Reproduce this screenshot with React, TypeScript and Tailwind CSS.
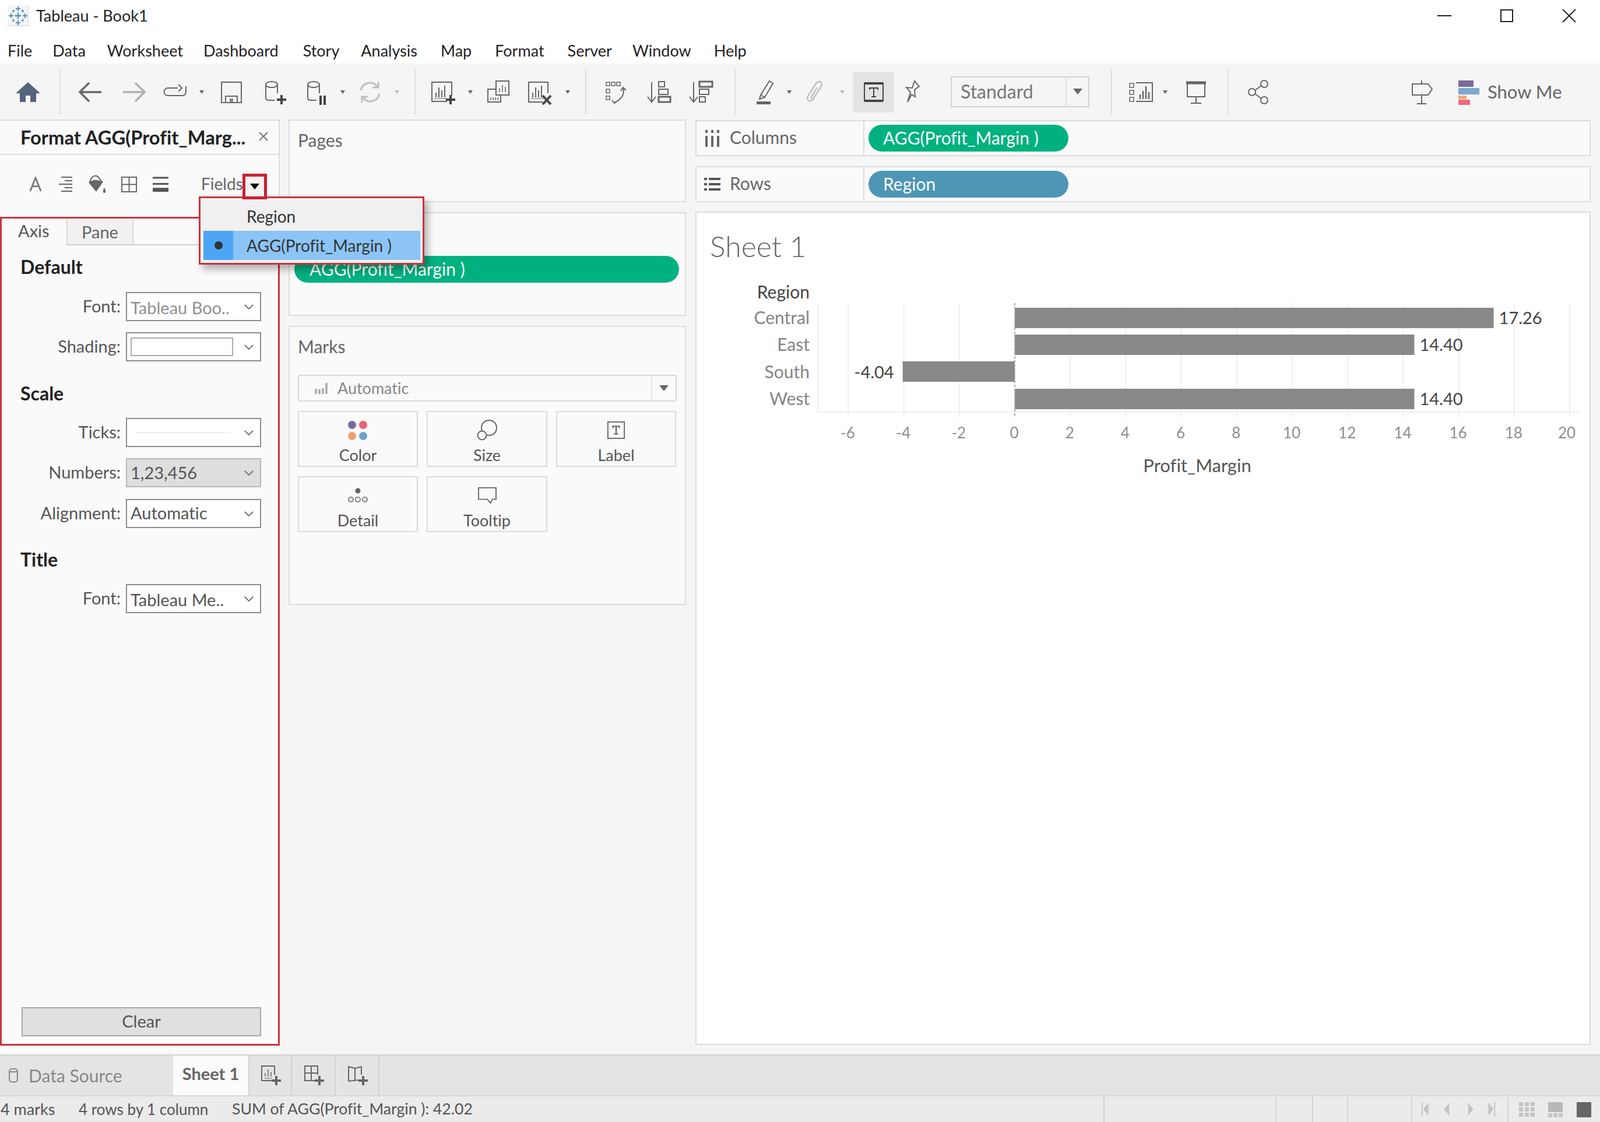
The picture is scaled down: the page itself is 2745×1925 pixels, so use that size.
import React from "react";

const Ic = ({ children, className = "" }: { children?: React.ReactNode; className?: string }) => (
  <svg viewBox="0 0 44 44" fill="none" stroke="#666666" strokeWidth="2" className={"w-[44px] h-[44px] flex-none " + className}>
    {children}
  </svg>
);
const Caret = ({ className = "", light = false }: { className?: string; light?: boolean }) => (
  <svg viewBox="0 0 12 12" className={"w-[12px] h-[12px] flex-none " + className}>
    <polygon points="2,3 10,3 6,9" fill={light ? "#bbbbbb" : "#666666"} />
  </svg>
);
const BigCaret = () => (
  <svg viewBox="0 0 18 12" className="w-[18px] h-[12px] flex-none">
    <polygon points="1,1 17,1 9,11" fill="#666666" />
  </svg>
);
const Sep = ({ className = "" }: { className?: string }) => <div className={"w-[2px] self-stretch bg-[#dedede] flex-none " + className} />;

const Bars = () => (
  <g strokeWidth="2">
    <path d="M11 31V23M16 31V14M21 31V19M26 31V11" />
    <path d="M8 33H30" strokeWidth="1" />
  </g>
);
const Plus = () => <path d="M36 27V43M28 35H44" stroke="#444444" strokeWidth="4" />;

function Chevron() {
  return (
    <svg viewBox="0 0 20 12" className="w-[18px] h-[11px] flex-none">
      <path d="M2 2L10 10L18 2" fill="none" stroke="#666666" strokeWidth="2" />
    </svg>
  );
}

function Select({ label, mt, gray, children }: { label: string; mt: string; gray?: boolean; children?: React.ReactNode }) {
  return (
    <div className={"flex items-center " + mt}>
      <div className="w-[204px] pb-[3px] text-right text-[29px] leading-[32px] text-[#555555] font-normal">{label}</div>
      <div className={gray
        ? "ml-[9px] w-[232px] h-[50px] flex items-center justify-between pl-[6px] pr-[10px] border-2 border-[#b8b8b8] bg-[#dedede]"
        : "ml-[9px] w-[232px] h-[50px] flex items-center justify-between pl-[6px] pr-[10px] border-2 border-[#8c8c8c] bg-white"}>
        <div className="flex-1 min-w-0 text-[29px] leading-[32px] whitespace-nowrap">{children}</div>
        <Chevron />
      </div>
    </div>
  );
}

function MarkCard({ label, children }: { label: string; children: React.ReactNode }) {
  return (
    <div className="h-[96px] border-2 border-[#dcdcdc] flex flex-col items-center pt-[11px]">
      <div className="h-[40px] flex items-center justify-center">{children}</div>
      <div className="mt-[8px] text-[27px] leading-[30px] text-[#555555]">{label}</div>
    </div>
  );
}

function Shelf({ icon, label, pill, color }: { icon: React.ReactNode; label: string; pill: string; color: string }) {
  return (
    <div className="h-[62px] flex-none flex items-center border-2 border-[#dcdcdc] bg-[#fafafa]">
      <div className="w-[288px] h-full flex items-center border-r-2 border-[#dcdcdc]">
        <div className="w-[57px] flex justify-center">{icon}</div>
        <span className="text-[30px] pb-[3px] text-[#666666]">{label}</span>
      </div>
      <div className={"ml-[7px] w-[343px] h-[46px] rounded-full flex items-center pl-[25px] pb-[2px] text-[30px] text-white " + color}>{pill}</div>
    </div>
  );
}

const gridXs = [-6, -4, -2, 0, 2, 4, 6, 8, 10, 12, 14, 16, 18, 20];
const X = (v: number) => 1741 + v * 47.6;
const rows = [
  { name: "Central", y: 546, top: 528, v: 17.26, t: "17.26" },
  { name: "East", y: 592, top: 574, v: 14.4, t: "14.40" },
  { name: "South", y: 639, top: 620, v: -4.04, t: "-4.04" },
  { name: "West", y: 685, top: 667, v: 14.4, t: "14.40" },
];

function Chart() {
  return (
    <svg viewBox="1195 480 1532 1311" className="w-[1532px] h-[1311px] block">
      {gridXs.map((v) => (
        <line key={v} x1={X(v)} x2={X(v)} y1={520} y2={716} stroke="#efefef" strokeWidth="2" />
      ))}
      <line x1="1403" x2="1403" y1="520" y2="707" stroke="#efefef" strokeWidth="2" />
      <line x1="1403" x2="2710" y1="707" y2="707" stroke="#efefef" strokeWidth="2" />
      {rows.map((r) => (
        <rect key={r.name} x={r.v > 0 ? 1741 : X(r.v)} y={r.top} width={Math.abs(r.v) * 47.6} height={35} fill="#888888" />
      ))}
      <line x1="1741" x2="1741" y1="520" y2="716" stroke="#aaaaaa" strokeWidth="2" strokeDasharray="4 3" />
      <text x="1389" y="502" dy="0.32em" textAnchor="end" className="text-[30px] fill-[#444444]">Region</text>
      {rows.map((r) => (
        <text key={r.name} x="1389" y={r.y} dy="0.32em" textAnchor="end" className="text-[30px] fill-[#858585]">{r.name}</text>
      ))}
      {rows.map((r) => (
        <text key={r.name} x={r.v > 0 ? X(r.v) + 9 : X(r.v) - 15} y={r.y} dy="0.35em" textAnchor={r.v > 0 ? "start" : "end"} className="text-[29px] fill-[#444444]">{r.t}</text>
      ))}
      {gridXs.map((v) => (
        <text key={v} x={v === 20 ? X(v) - 5 : X(v) - 1} y="743" dy="0.35em" textAnchor="middle" className="text-[26px] fill-[#8f8f8f]">{v}</text>
      ))}
      <text x="2054" y="800" dy="0.32em" textAnchor="middle" className="text-[31px] fill-[#555555]">Profit_Margin</text>
    </svg>
  );
}

function Logo() {
  const plus = (x: number, y: number, r: number, w: number) => (
    <path key={x + "-" + y} d={`M${x - r} ${y}H${x + r}M${x} ${y - r}V${y + r}`} stroke="#4f94c6" strokeWidth={w} fill="none" />
  );
  return (
    <svg viewBox="0 0 36 36" className="w-[36px] h-[36px] flex-none ml-[13px]">
      <rect x="0" y="0" width="36" height="36" fill="#f6f6f6" />
      <path d="M0 35H35V0" fill="none" stroke="#cfcfcf" />
      {plus(18, 18, 5.5, 2.4)}
      {plus(18, 6, 4, 2)}
      {plus(18, 30, 4, 2)}
      {plus(6, 18, 4, 2)}
      {plus(30, 18, 4, 2)}
      {plus(10, 10, 2.5, 1.6)}
      {plus(26, 10, 2.5, 1.6)}
      {plus(10, 26, 2.5, 1.6)}
      {plus(26, 26, 2.5, 1.6)}
    </svg>
  );
}

const menu = [
  ["File", "ml-[13px]"],
  ["Data", "ml-[35px]"],
  ["Worksheet", "ml-[37px]"],
  ["Dashboard", "ml-[35px]"],
  ["Story", "ml-[42px]"],
  ["Analysis", "ml-[37px]"],
  ["Map", "ml-[40px]"],
  ["Format", "ml-[40px]"],
  ["Server", "ml-[40px]"],
  ["Window", "ml-[35px]"],
  ["Help", "ml-[39px]"],
];

export default function App() {
  return (
    <div className="relative w-[2745px] h-[1925px] overflow-hidden flex flex-col bg-[#f5f5f5] font-[Lato,sans-serif] text-[#444444] [font-variant-ligatures:none]">
      {/* Title bar */}
      <div className="h-[54px] flex-none flex items-center bg-white font-['Noto_Sans',sans-serif]">
        <Logo />
        <span className="ml-[13px] text-[27px] text-[#222222]">Tableau - Book1</span>
        <div className="ml-auto flex items-center pr-[41px]">
          <div className="w-[24px] h-[2px] bg-[#222222]" />
          <div className="ml-[84px] w-[22px] h-[22px] border-2 border-[#222222]" />
          <svg viewBox="0 0 24 24" className="ml-[84px] w-[24px] h-[24px]"><path d="M1 1L23 23M23 1L1 23" stroke="#222222" strokeWidth="2" /></svg>
        </div>
      </div>
      {/* Menu */}
      <div className="h-[55px] flex-none pt-[11px] flex items-center bg-white font-['Noto_Sans',sans-serif] text-[27px] text-[#222222]">
        {menu.map(([m, c]) => (
          <span key={m} className={c}>{m}</span>
        ))}
      </div>
      {/* Toolbar */}
      <div className="h-[88px] flex-none pt-[10px] flex items-center bg-[#f5f5f5]">
        <Ic className="ml-[26px]"><path d="M22 5L1 24H8V39H18V28H26V39H36V24H43Z" fill="#54647a" stroke="none" /></Ic>
        <Sep className="ml-[32px]" />
        <Ic className="ml-[29px]"><path d="M41 22H5M20 6L4 22L20 38" strokeWidth="3.5" stroke="#666666" /></Ic>
        <Ic className="ml-[31px]"><path d="M3 22H39M24 6L40 22L24 38" strokeWidth="3.5" stroke="#b0b0b0" /></Ic>
        <Ic className="ml-[26px]"><path d="M27 15H10A6.5 6.5 0 0 0 10 28H35A6 6 0 0 0 41 22V12" /><path d="M28 9L34 15L28 21" /></Ic>
        <Caret className="ml-[18px]" />
        <Ic className="ml-[23px]"><rect x="5" y="5" width="34" height="35" /><rect x="12" y="29" width="20" height="11" strokeWidth="2" /><rect x="19" y="33" width="6" height="6" fill="#888888" stroke="none" /></Ic>
        <Ic className="ml-[28px]"><ellipse cx="19" cy="9" rx="10" ry="5" /><path d="M9 9V32Q9 36 14 36H24M29 9V24" /><Plus /></Ic>
        <Ic className="ml-[28px]"><ellipse cx="19" cy="9" rx="10" ry="5" /><path d="M9 9V32Q9 36 14 36H24M29 9V24" /><path d="M31 28V44M38 28V44" stroke="#444444" strokeWidth="4" /></Ic>
        <Caret className="ml-[19px]" />
        <Ic className="ml-[19px]"><g stroke="#bdbdbd" strokeWidth="3"><path d="M6 19A16 16 0 0 1 34 12" /><path d="M38 25A16 16 0 0 1 10 32" /><path d="M36 4V14H26" /><path d="M8 40V30H18" /></g></Ic>
        <Caret light className="ml-[18px]" />
        <Sep className="ml-[24px]" />
        <Ic className="ml-[24px]"><path d="M30 38H4V5H38V28" /><Bars /><Plus /></Ic>
        <Caret className="ml-[20px]" />
        <Ic className="ml-[20px]"><rect x="18" y="3" width="22" height="24" /><path d="M24 22V15M29 22V10M34 22V13" strokeWidth="1.5" /><path d="M18 17H4V39H26V27" /><path d="M9 31V36M13 31V36M17 31V36M21 31V36" strokeWidth="1.5" /></Ic>
        <Ic className="ml-[26px]"><path d="M28 39H4V5H37V24" /><Bars /><path d="M28 28L42 43M42 28L28 43" stroke="#444444" strokeWidth="4" /></Ic>
        <Caret className="ml-[21px]" />
        <Sep className="ml-[24px]" />
        <Ic className="ml-[28px]"><g strokeWidth="1.5"><rect x="6" y="5" width="6" height="6" /><rect x="15" y="5" width="6" height="6" /><rect x="24" y="5" width="6" height="6" /><rect x="6" y="17" width="6" height="6" /><rect x="6" y="29" width="6" height="6" /></g><path d="M35 15C38 26 32 35 20 40M16 36L20 41L25 37M31 20L35 14L40 19" /></Ic>
        <Ic className="ml-[30px]"><path d="M10 5V38M3 30L10 39L17 30" /><rect x="22" y="4" width="10" height="9" /><rect x="22" y="17" width="16" height="9" /><rect x="22" y="30" width="20" height="9" strokeWidth="3" /></Ic>
        <Ic className="ml-[28px]"><path d="M10 5V38M3 30L10 39L17 30" /><rect x="20" y="4" width="22" height="9" strokeWidth="3" /><rect x="20" y="17" width="16" height="9" /><rect x="20" y="30" width="10" height="9" /></Ic>
        <Sep className="ml-[36px]" />
        <Ic className="ml-[28px]"><path d="M30 3L36 7L22 31L13 34L15 27Z" /><path d="M15 27L22 31" /><rect x="8" y="38" width="24" height="5" fill="#666666" stroke="none" /></Ic>
        <Caret className="ml-[14px]" />
        <Ic className="ml-[16px]"><path d="M32 13L19 34C15 41 6 36 10 29L24 7C28 1 37 5 33 12L20 32C18 35 14 33 16 30L26 14" stroke="#c0c0c0" strokeWidth="2.4" /></Ic>
        <Caret light className="ml-[19px]" />
        <div className="ml-[13px] w-[70px] h-[70px] flex-none flex items-center justify-center bg-[#e3e3e3]">
          <svg viewBox="0 0 36 36" className="w-[36px] h-[36px]">
            <rect x="2" y="3" width="32" height="30" fill="none" stroke="#444444" strokeWidth="2" />
            <path d="M2 3H34M2 33H34" stroke="#444444" strokeWidth="4" />
            <path d="M11 14V11H25V14M18 11V26M14 26H22" fill="none" stroke="#444444" strokeWidth="2" />
          </svg>
        </div>
        <Ic className="ml-[9px]"><path d="M26 3L34 12L26 18L27 30L21 26L14 39L19 22L12 14L22 15Z" /></Ic>
        <div className="ml-[44px] -mt-[2px] w-[238px] h-[53px] flex-none flex items-center border-2 border-[#d4d4d4] bg-[#f5f5f5]">
          <span className="flex-1 pl-[15px] text-[32px] text-[#777777]">Standard</span>
          <div className="w-[39px] h-full border-l-2 border-[#e0e0e0] flex items-center justify-center"><BigCaret /></div>
        </div>
        <Sep className="ml-[37px]" />
        <Ic className="ml-[29px]"><g strokeWidth="1.5"><rect x="1" y="7" width="7" height="7" /><rect x="1" y="19" width="7" height="7" /><rect x="1" y="31" width="7" height="7" /></g><path d="M12 6H40V38H12" /><path d="M19 34V26M24 34V20M29 34V12M34 34V22" strokeWidth="2.5" /></Ic>
        <Caret className="ml-[12px]" />
        <Ic className="ml-[25px]"><path d="M5 6H39" strokeWidth="5" /><rect x="7" y="6" width="30" height="24" /><path d="M22 30V41M13 41H31" /></Ic>
        <Sep className="ml-[32px]" />
        <Ic className="ml-[30px]"><circle cx="31" cy="8" r="6" /><circle cx="10" cy="22" r="6" /><circle cx="31" cy="36" r="6" /><path d="M26 11L15 19M15 25L26 33" /></Ic>
        <Ic className="ml-[235px]"><path d="M22 2V8M22 27V42M14 42H30" /><path d="M6 8H33L40 17L33 27H6Z" /></Ic>
        <svg viewBox="0 0 44 44" className="ml-[33px] w-[44px] h-[44px] flex-none">
          <rect x="8" y="2" width="26" height="11" fill="#7d6a9c" />
          <rect x="8" y="15" width="36" height="11" fill="#7ea6d2" />
          <rect x="8" y="28" width="14" height="6" fill="#f0a877" />
          <rect x="8" y="35" width="20" height="9" fill="#ef6a7e" />
        </svg>
        <span className="ml-[14px] -mt-[2px] text-[31px] text-[#666666] whitespace-nowrap">Show Me</span>
      </div>
      {/* Main */}
      <div className="flex-1 min-h-0 flex">
        {/* Format panel */}
        <div className="mt-[8px] w-[480px] flex-none flex flex-col bg-[#fafafa] border-t-2 border-[#dcdcdc]">
          <div className="h-[59px] flex-none flex items-center pl-[35px] border-b-2 border-[#dcdcdc] border-r-2">
            <span className="text-[32.7px] font-bold text-[#222222] whitespace-nowrap">Format AGG(Profit_Marg...</span>
            <svg viewBox="0 0 18 18" className="ml-[22px] w-[18px] h-[18px] -mt-[4px]"><path d="M2 2L16 16M16 2L2 16" stroke="#777777" strokeWidth="2" /></svg>
          </div>
          <div className="h-[106px] flex-none flex items-center border-r-2 border-[#dcdcdc] pb-[6px]">
            <svg viewBox="0 0 24 28" className="ml-[50px] w-[22px] h-[26px] flex-none"><path d="M2 27L12 2L22 27M6 18H18" fill="none" stroke="#777777" strokeWidth="3" /></svg>
            <svg viewBox="0 0 26 28" className="ml-[27px] w-[26px] h-[28px] flex-none"><path d="M6 2H25M12 8H25M2 14H25M12 20H25M6 26H25" stroke="#666666" strokeWidth="2" /></svg>
            <svg viewBox="0 0 36 36" className="ml-[23px] w-[36px] h-[36px] flex-none">
              <path d="M4 15L15 3L29 14L17 31Z" fill="#666666" />
              <path d="M7 15C6 7 14 2 18 4C22 6 25 11 25 14C18 11 11 11 7 15Z" fill="#fafafa" stroke="#666666" strokeWidth="2" />
              <path d="M31 24C28 29 28 33 31 33C34 33 34 29 31 24Z" fill="#666666" />
            </svg>
            <svg viewBox="0 0 28 28" className="ml-[24px] w-[27px] h-[27px] flex-none"><rect x="1" y="1" width="26" height="26" fill="none" stroke="#666666" strokeWidth="2" /><path d="M14 1V27M1 14H27" stroke="#666666" strokeWidth="2" /></svg>
            <svg viewBox="0 0 28 28" className="ml-[27px] w-[27px] h-[27px] flex-none"><path d="M0 2H28M0 13H28" stroke="#555555" strokeWidth="3" /><rect x="0" y="20" width="28" height="7" fill="#555555" /></svg>
            <span className="ml-[56px] -mt-[2px] text-[28px] text-[#666666]">Fields</span>
          </div>
          <div className="h-[1422px] flex-none flex flex-col border-[3px] border-[#c9343e] relative">
            <div className="h-[46px] flex-none flex border-b-2 border-[#d0d0d0]">
              <div className="w-[113px] -mb-[2px] pl-[28px] text-[29px] leading-[42px] bg-[#fafafa] text-[#555555] border-r-2 border-[#d8d8d8]">Axis</div>
              <div className="w-[113px] bg-[#f1f1f1] border-r-2 border-[#d8d8d8] flex items-center justify-center text-[29px] text-[#666666] mt-[1px]">Pane</div>
            </div>
            <div className="mt-[17px] pl-[32px] h-[40px] flex items-center text-[32px] font-bold text-[#222222]">Default</div>
            <Select label="Font:" mt="mt-[23px]"><div className="pt-[3px] text-[#909090]">Tableau Boo..</div></Select>
            <Select label="Shading:" mt="mt-[19px]"><div className="w-[176px] h-[32px] border-2 border-[#aaaaaa] bg-white" /></Select>
            <div className="mt-[35px] pl-[32px] h-[40px] flex items-center text-[32px] font-bold text-[#222222]">Scale</div>
            <Select label="Ticks:" mt="mt-[22px]"><div className="ml-[8px] w-[163px] h-[2px] bg-[#eeeeee]" /></Select>
            <Select label="Numbers:" mt="mt-[19px]" gray><span className="text-[#555555]">1,23,456</span></Select>
            <Select label="Alignment:" mt="mt-[20px]"><div className="pb-[2px] text-[#555555]">Automatic</div></Select>
            <div className="mt-[34px] pl-[32px] h-[40px] flex items-center text-[32px] font-bold text-[#222222]">Title</div>
            <Select label="Font:" mt="mt-[22px]"><div className="pt-[3px] text-[#555555]">Tableau Me..</div></Select>
            <div className="mt-auto mb-[13px] ml-[34px] w-[411px] h-[50px] pb-[2px] flex items-center justify-center bg-[#e0e0e0] border-2 border-[#a8a8a8] text-[29px] text-[#555555]">Clear</div>
          </div>
        </div>
        {/* Middle */}
        <div className="ml-[15px] mt-[8px] w-[682px] flex-none flex flex-col gap-[17px]">
          <div className="h-[142px] flex-none border-2 border-[#dcdcdc] bg-[#fafafa] pl-[14px] pt-[11px] text-[30px] text-[#666666]">Pages</div>
          <div className="h-[178px] flex-none relative border-2 border-[#dcdcdc] bg-[#fafafa] text-[30px] text-[#666666]">
            <div className="absolute left-[8px] top-[73px] w-[660px] h-[46px] pb-[2px] rounded-full bg-[#00b180] text-white flex items-center pl-[26px]">AGG(Profit_Margin )</div>
          </div>
          <div className="h-[479px] flex-none border-2 border-[#dcdcdc] bg-[#fafafa] px-[14px] pt-[17px]">
            <div className="h-[32px] flex items-center text-[30px] text-[#666666]">Marks</div>
            <div className="mt-[33px] h-[46px] flex items-center rounded-[3px] border-2 border-[#d8d8d8]">
              <svg viewBox="0 0 24 24" className="ml-[26px] w-[24px] h-[24px] flex-none"><path d="M3 22V13M9 22V14M15 22V12M21 22V3" stroke="#aaaaaa" strokeWidth="3.5" /></svg>
              <span className="ml-[16px] flex-1 text-[27px] text-[#888888]">Automatic</span>
              <div className="w-[42px] h-full border-l-2 border-[#e4e4e4] flex items-center justify-center"><BigCaret /></div>
            </div>
            <div className="mt-[16px] grid grid-cols-[206px_207px_206px] gap-x-[15px] gap-y-[16px]">
              <MarkCard label="Color">
                <svg viewBox="0 0 36 36" className="w-[36px] h-[36px]">
                  <circle cx="8" cy="9" r="7" fill="#7b6a9e" />
                  <circle cx="27" cy="9" r="7" fill="#ee5f73" />
                  <circle cx="8" cy="28" r="7" fill="#f0a06e" />
                  <circle cx="27" cy="28" r="7" fill="#6f9fd0" />
                </svg>
              </MarkCard>
              <MarkCard label="Size">
                <svg viewBox="0 0 36 36" className="w-[36px] h-[36px]" fill="none" stroke="#666666" strokeWidth="2"><circle cx="21" cy="14" r="13" /><circle cx="9" cy="27" r="7.5" fill="#fafafa" /></svg>
              </MarkCard>
              <MarkCard label="Label">
                <svg viewBox="0 0 34 34" className="w-[32px] h-[32px]"><rect x="2" y="2" width="30" height="30" fill="none" stroke="#666666" strokeWidth="2" /><path d="M11 13V10H23V13M17 10V24M13 24H21" fill="none" stroke="#555555" strokeWidth="2" /></svg>
              </MarkCard>
              <MarkCard label="Detail">
                <svg viewBox="0 0 36 26" className="w-[36px] h-[26px]"><circle cx="18" cy="5" r="4.5" fill="#666666" /><circle cx="6" cy="20" r="4" fill="none" stroke="#666666" strokeWidth="1.6" /><circle cx="18" cy="20" r="4" fill="none" stroke="#666666" strokeWidth="1.6" /><circle cx="30" cy="20" r="4" fill="none" stroke="#666666" strokeWidth="1.6" /></svg>
              </MarkCard>
              <MarkCard label="Tooltip">
                <svg viewBox="0 0 36 32" className="w-[34px] h-[30px]"><path d="M2 2H34V23H27L24 30L18 23H2Z" fill="none" stroke="#666666" strokeWidth="2" /></svg>
              </MarkCard>
            </div>
          </div>
        </div>
        {/* Right */}
        <div className="ml-[16px] mt-[9px] mb-[16px] w-[1536px] flex-none flex flex-col">
          <Shelf
            label="Columns"
            pill="AGG(Profit_Margin )"
            color="bg-[#00b180]"
            icon={<svg viewBox="0 0 26 32" className="w-[26px] h-[32px] -ml-[4px]"><path d="M3 12V31M13 12V31M23 12V31" stroke="#666666" strokeWidth="4" /><path d="M3 2V7M13 2V7M23 2V7" stroke="#666666" strokeWidth="4" /></svg>}
          />
          <div className="mt-[17px]">
            <Shelf
              label="Rows"
              pill="Region"
              color="bg-[#4e96b6]"
              icon={<svg viewBox="0 0 30 26" className="w-[30px] h-[26px] -ml-[4px]"><path d="M1 4H6M1 13H6M1 22H6M9 4H29M9 13H29M9 22H29" stroke="#555555" strokeWidth="4" /></svg>}
            />
          </div>
          <div className="mt-[16px] flex-1 min-h-0 border-2 border-[#dcdcdc] bg-white overflow-hidden">
            <div className="h-[115px] pl-[23px] pt-[27px]">
              <div className="h-[60px] flex items-center text-[50px] font-light text-[#666666]">Sheet 1</div>
            </div>
            <Chart />
          </div>
        </div>
      </div>
      {/* Sheet tabs */}
      <div className="h-[70px] flex-none flex items-stretch bg-[#e4e4e4] border-t-2 border-[#d2d2d2]">
        <div className="w-[297px] flex items-center pl-[14px]">
          <svg viewBox="0 0 20 30" className="w-[18px] h-[26px]"><rect x="2" y="2" width="16" height="26" rx="5" fill="none" stroke="#888888" strokeWidth="2.4" /><path d="M2 8H18" stroke="#888888" strokeWidth="2.4" /></svg>
          <span className="ml-[17px] text-[30px] text-[#888888]">Data Source</span>
        </div>
        <div className="w-[129px] bg-[#fbfbfb] flex items-center justify-center pb-[6px] text-[29px] font-bold text-[#666666] whitespace-nowrap">Sheet 1</div>
        <div className="w-[75px] border-r-2 border-l-2 border-[#d2d2d2] flex items-center justify-center">
          <svg viewBox="0 0 36 36" className="w-[36px] h-[36px]" fill="none" stroke="#666666" strokeWidth="2"><path d="M22 27H3V2H25V17" /><path d="M9 20V14M14 20V8M19 20V12" strokeWidth="1.5" /><path d="M8 23H20" strokeWidth="1" /><path d="M28 19V35M20 27H36" stroke="#666666" strokeWidth="4" /></svg>
        </div>
        <div className="w-[75px] border-r-2 border-[#d2d2d2] flex items-center justify-center">
          <svg viewBox="0 0 36 36" className="w-[36px] h-[36px]" fill="none" stroke="#666666" strokeWidth="2"><path d="M20 27H3V2H25V17" /><path d="M14 2V27M3 14H25" /><path d="M28 19V35M20 27H36" stroke="#666666" strokeWidth="4" /></svg>
        </div>
        <div className="w-[75px] border-r-2 border-[#d2d2d2] flex items-center justify-center">
          <svg viewBox="0 0 36 36" className="w-[36px] h-[36px]" fill="none" stroke="#666666" strokeWidth="2"><path d="M20 26L3 28V3L14 6L25 3V17" /><path d="M14 6V27" /><path d="M28 19V35M20 27H36" stroke="#666666" strokeWidth="4" /></svg>
        </div>
      </div>
      {/* Status bar */}
      <div className="h-[46px] flex-none flex items-stretch bg-[#ebebeb] border-t-2 border-[#d8d8d8] text-[26px] text-[#555555]">
        <div className="w-[1893px] flex-none flex items-center pl-[1px] whitespace-nowrap">
          <span className="w-[134px] text-[27px]">4 marks</span>
          <span className="w-[263px]">4 rows by 1 column</span>
          <span className="text-[26.6px]">SUM of AGG(Profit_Margin ): 42.02</span>
        </div>
        <div className="w-[296px] border-l-2 border-[#d4d4d4]" />
        <div className="w-[63px] border-l-2 border-[#d4d4d4]" />
        <div className="w-[61px] border-l-2 border-[#d4d4d4]" />
        <div className="w-[110px] border-l-2 border-[#d4d4d4]" />
        <div className="w-[165px] border-l-2 border-[#d4d4d4] flex items-center">
          <svg viewBox="0 0 165 30" className="w-[165px] h-[30px]" fill="#c4c4c4">
            <rect x="16" y="3" width="2" height="24" />
            <polygon points="19,15 28,4 28,26" />
            <polygon points="55,15 64,4 64,26" />
            <polygon points="97,4 106,15 97,26" />
            <polygon points="132,4 141,15 132,26" />
            <rect x="142" y="3" width="2" height="24" />
          </svg>
        </div>
        <div className="flex-1 border-l-2 border-[#d4d4d4] flex items-center">
          <svg viewBox="0 0 157 30" className="w-[157px] h-[30px]">
            <g fill="#c4c4c4">
              <rect x="18" y="3" width="7" height="7" /><rect x="28" y="3" width="7" height="7" /><rect x="38" y="3" width="7" height="7" />
              <rect x="18" y="12" width="7" height="7" /><rect x="28" y="12" width="7" height="7" /><rect x="38" y="12" width="7" height="7" />
              <rect x="18" y="21" width="7" height="7" /><rect x="28" y="21" width="7" height="7" /><rect x="38" y="21" width="7" height="7" />
              <rect x="68" y="3" width="25" height="17" fill="#b8b8b8" />
              <rect x="68" y="22" width="7" height="7" /><rect x="77" y="22" width="7" height="7" /><rect x="86" y="22" width="7" height="7" />
            </g>
            <rect x="117" y="3" width="25" height="26" fill="#666666" />
          </svg>
        </div>
      </div>
      {/* Field dropdown over the panels */}
      <div className="absolute left-[341px] top-[337px] w-[387px] h-[117px] flex flex-col border-[3px] border-[#c9343e] bg-[#f0f0f0] pl-[5px] pr-[4px] shadow-[6px_8px_12px_rgba(0,0,0,0.3)]">
        <div className="h-[56px] flex-none pt-[6px] flex items-center pl-[74px] text-[28px] text-[#333333]">Region</div>
        <div className="h-[50px] flex-none flex items-stretch bg-[#8cc4f5] text-[28px] text-[#333333]">
          <div className="w-[51px] bg-[#4da6f5] flex items-center justify-center"><div className="w-[14px] h-[14px] rounded-full bg-[#333333]" /></div>
          <div className="pl-[23px] flex items-center whitespace-nowrap">AGG(Profit_Margin )</div>
        </div>
      </div>
      <div className="absolute left-[416px] top-[298px] w-[42px] h-[44px] border-[5px] border-[#cc1f2f] bg-[#f4f4f4] flex items-center justify-center">
        <svg viewBox="0 0 16 10" className="w-[16px] h-[10px]"><polygon points="0,0 16,0 8,10" fill="#000000" /></svg>
      </div>
    </div>
  );
}
